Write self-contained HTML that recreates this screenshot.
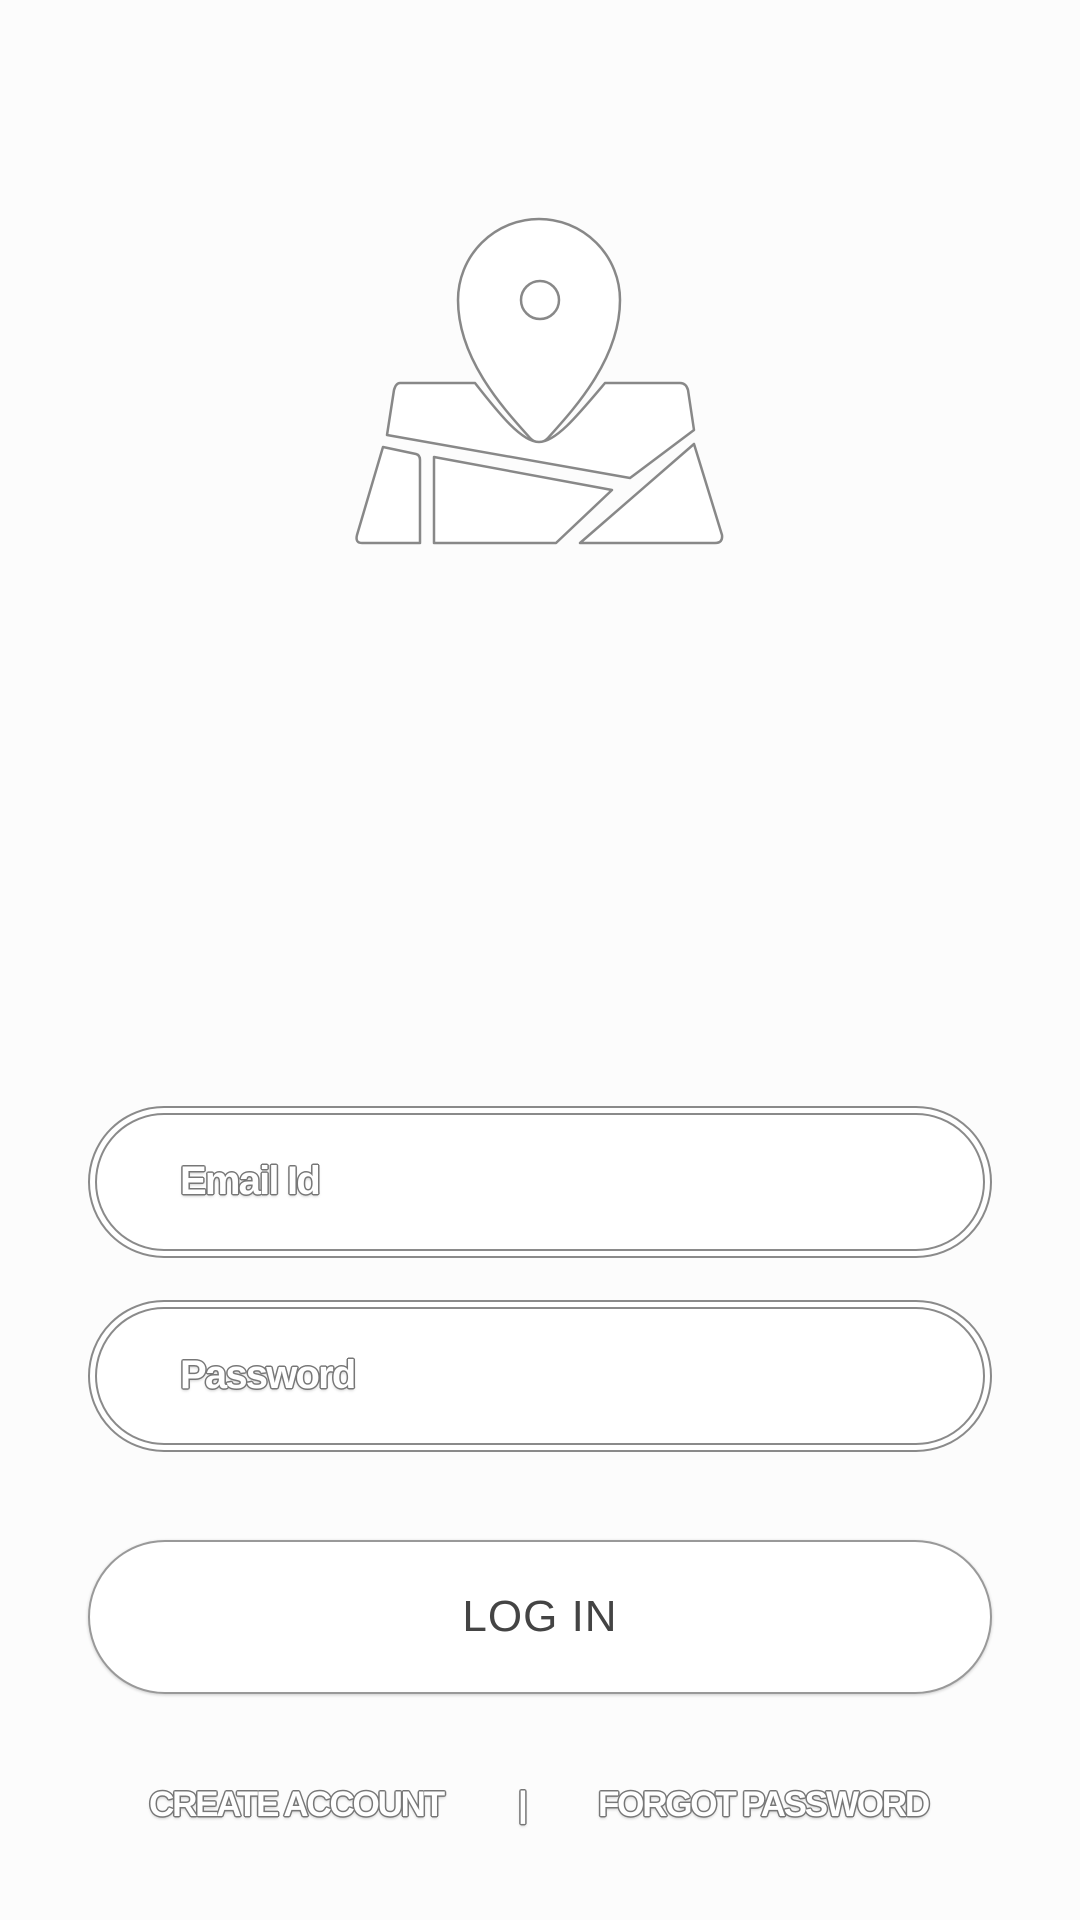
<!DOCTYPE html>
<html><head><meta charset="utf-8"><style>
html,body{margin:0;padding:0}
body{width:1080px;height:1920px;background:#fcfcfc;position:relative;overflow:hidden;font-family:"Liberation Sans",sans-serif}
.f{position:absolute;left:88px;width:904px;height:152px;box-sizing:border-box;border:2px solid #8a8a8a;border-radius:76px;background:#fff;}
.f::after{content:"";position:absolute;left:5px;top:5px;right:5px;bottom:5px;border:2px solid #8a8a8a;border-radius:70px}
.ol{color:#fff;text-shadow:-1.5px 0 #777,1.5px 0 #777,0 -1.5px #777,0 1.5px #777,-1px -1px #777,1px 1px #777,-1px 1px #777,1px -1px #777,0 2px 3px rgba(0,0,0,.25)}
.ph{position:absolute;left:90px;top:51px;font-size:40px;font-weight:bold;letter-spacing:-1.8px}
.btn{position:absolute;left:88px;top:1540px;width:904px;height:154px;box-sizing:border-box;border:2px solid #999;border-radius:77px;background:#fff;box-shadow:0 1px 3px rgba(0,0,0,.2);text-align:center;line-height:150px;font-size:44px;color:#444;letter-spacing:1px}
.ft{position:absolute;top:1785px;font-size:35px;font-weight:bold;letter-spacing:-2.2px}
</style></head><body>
<svg width="1080" height="1920" style="position:absolute;left:0;top:0" viewBox="0 0 1080 1920">
<g fill="#fff" stroke="#888" stroke-width="2.5" stroke-linejoin="round">
<path d="M530 438 C505 410 458 360 458 300 A81 81 0 0 1 620 300 C620 360 573 410 548 438 Q539 447 530 438 Z"/>
<circle cx="540" cy="300" r="19"/>
<path d="M400 383 L475 383 C500 415 522 442 539 442 C556 442 578 415 605 383 L680 383 Q686 383 688 390 L694 430 L630 478 L387 435 L394 390 Q396 383 400 383 Z"/>
<path d="M383 447 L416 454 Q420 455 420 460 L420 543 L362 543 Q355 543 357 535 Z"/>
<path d="M434 457 L612 490 L556 543 L434 543 Z"/>
<path d="M694 444 L722 535 Q723 543 715 543 L580 543 Z"/>
</g>
</svg>
<div class="f" style="top:1106px"><div class="ph ol">Email Id</div></div>
<div class="f" style="top:1300px"><div class="ph ol">Password</div></div>
<div class="btn">LOG IN</div>
<div class="ft ol" style="left:149px">CREATE ACCOUNT</div>
<div class="ft ol" style="left:518px">|</div>
<div class="ft ol" style="left:598px">FORGOT PASSWORD</div>
</body></html>
